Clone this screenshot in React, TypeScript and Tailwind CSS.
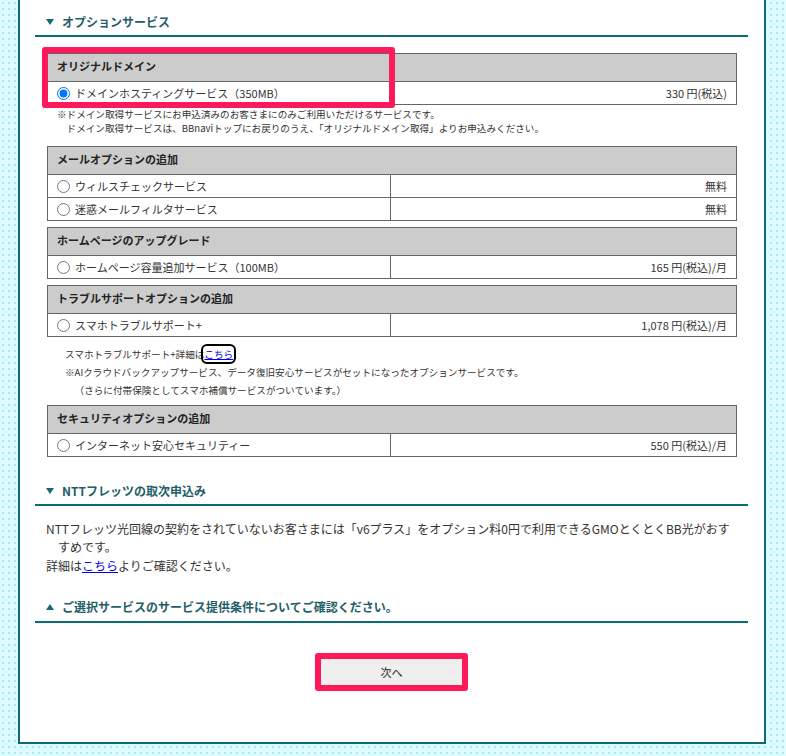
import React from 'react';

type Row = { label: string; price: string; checked?: boolean };

function Tri({ up = false }: { up?: boolean }) {
  return (
    <svg width="8" height="6" viewBox="0 0 8 6" className="shrink-0">
      <polygon points={up ? '4,0 8,6 0,6' : '0,0 8,0 4,6'} fill="#136a76" />
    </svg>
  );
}

function Heading({ up, children, className = '' }: { up?: boolean; children: React.ReactNode; className?: string }) {
  return (
    <div className={`flex items-center gap-[8px] pl-[11px] pt-[14px] border-b-2 border-[#0b6b78] ${className}`}>
      <Tri up={up} />
      <span className="text-[12px] leading-[16px] font-bold text-[#235e68]">{children}</span>
    </div>
  );
}

function OptionTable({ title, rows, name }: { title: string; rows: Row[]; name: string }) {
  return (
    <div className="w-[690px] border border-[#666] bg-white text-[11px] text-[#333]">
      <div className="h-[28px] bg-[#ccc] border-b border-[#666] flex items-center pl-[9px] pb-[3px] font-bold text-[#222]">
        {title}
      </div>
      {rows.map((r, i) => (
        <div key={r.label} className={`flex ${i > 0 ? 'h-[23px] border-t border-[#666]' : 'h-[22px]'}`}>
          <label className="w-[343px] border-r border-[#666] flex items-center gap-[5px] pl-[9px] leading-[14px]">
            <input type="radio" name={name} defaultChecked={r.checked} className="m-0 w-[13px] h-[13px]" />
            <span className="pb-[1px]">{r.label}</span>
          </label>
          <div className="flex-1 flex items-center justify-end pr-[9px] pb-[1px] leading-[14px]">{r.price}</div>
        </div>
      ))}
    </div>
  );
}

export default function App() {
  return (
    <div className="min-h-[756px] bg-[#defbff] bg-[radial-gradient(#a4ecf6_1px,transparent_1.3px)] bg-[size:6px_6px] pb-[12px] font-['Noto_Sans_CJK_JP','Noto_Sans',sans-serif]">
      <div className="ml-[18px] mr-[20px] bg-white border-x-2 border-b-2 border-[#0b6b78] pl-[15px] pr-[16px] pb-[51px]">
        <Heading className="pb-[5px]">オプションサービス</Heading>

        <div className="ml-[12px]">
          <div className="relative mt-[16px]">
            <OptionTable
              name="domain"
              title="オリジナルドメイン"
              rows={[{ label: 'ドメインホスティングサービス（350MB）', price: '330 円(税込)', checked: true }]}
            />
            <div className="absolute left-[-5px] top-[-6px] w-[353px] h-[61px] border-[6px] border-[#fe1a5a] rounded-[3px] pointer-events-none" />
          </div>

          <div className="mt-[2px] mb-[11px] ml-[10px] text-[9.6px] leading-[14px] text-[#333]">
            <p>※ドメイン取得サービスにお申込済みのお客さまにのみご利用いただけるサービスです。</p>
            <p className="pl-[1em]">ドメイン取得サービスは、BBnaviトップにお戻りのうえ、「オリジナルドメイン取得」よりお申込みください。</p>
          </div>

          <OptionTable
            name="mail"
            title="メールオプションの追加"
            rows={[
              { label: 'ウィルスチェックサービス', price: '無料' },
              { label: '迷惑メールフィルタサービス', price: '無料' },
            ]}
          />
          <div className="mt-[6px]">
            <OptionTable
              name="hp"
              title="ホームページのアップグレード"
              rows={[{ label: 'ホームページ容量追加サービス（100MB）', price: '165 円(税込)/月' }]}
            />
          </div>
          <div className="mt-[6px]">
            <OptionTable
              name="trouble"
              title="トラブルサポートオプションの追加"
              rows={[{ label: 'スマホトラブルサポート+', price: '1,078 円(税込)/月' }]}
            />
          </div>

          <div className="mt-[8px] mb-[6px] ml-[18px] text-[9.6px] leading-[18px] text-[#333]">
            <p>
              スマホトラブルサポート+詳細は
              <a href="#" className="text-[#0000ee] underline outline-2 outline-black rounded-[3px] outline-offset-[1px]">
                こちら
              </a>
            </p>
            <p>※AIクラウドバックアップサービス、データ復旧安心サービスがセットになったオプションサービスです。</p>
            <p className="pl-[1em]">（さらに付帯保険としてスマホ補償サービスがついています。）</p>
          </div>

          <OptionTable
            name="security"
            title="セキュリティオプションの追加"
            rows={[{ label: 'インターネット安心セキュリティー', price: '550 円(税込)/月' }]}
          />
        </div>

        <Heading className="mt-[12px] pb-[5px]">NTTフレッツの取次申込み</Heading>

        <div className="mt-[14px] ml-[11px] text-[12px] leading-[18px] text-[#333]">
          <p className="h-[18px] whitespace-nowrap">
            NTTフレッツ光回線の契約をされていないお客さまには「v6プラス」をオプション料0円で利用できるGMOとくとくBB光がおす
          </p>
          <p className="h-[19px] pl-[12px]">すめです。</p>
          <p className="h-[19px]">
            詳細は<a href="#" className="text-[#0000ee] underline">こちら</a>よりご確認ください。
          </p>
        </div>

        <Heading up className="mt-[9px] pb-[6px]">ご選択サービスのサービス提供条件についてご確認ください。</Heading>

        <div className="mt-[30px] flex justify-center">
          <div className="border-[6px] border-[#fe1a5a] rounded-[3px]">
            <button className="w-[141px] h-[26px] bg-[#efefef] text-[11px] text-[#222] flex items-center justify-center">
              次へ
            </button>
          </div>
        </div>
      </div>
    </div>
  );
}
